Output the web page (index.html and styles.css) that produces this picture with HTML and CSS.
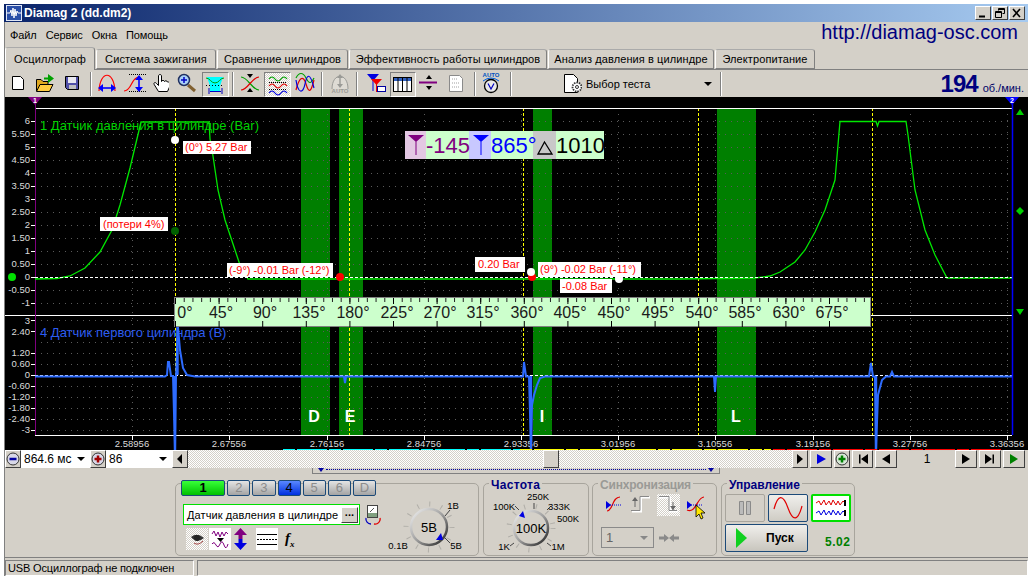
FILE: index.html
```html
<!DOCTYPE html>
<html lang="en">
<head>
  <meta charset="UTF-8" />
  <title>Diamag 2 (dd.dm2)</title>
  <link rel="stylesheet" href="styles.css">
</head>
<body>
<div class="window">
  <div class="titlebar">
    <svg width="16" height="16" viewBox="0 0 16 16"><rect x="0.5" y="0.5" width="15" height="15" fill="#2a4fa8" stroke="#dfe6f5"/><path d="M1 8H4L5 5 6 11 7 3 8 13 9 4 10 11 11 6 12 8H15" fill="none" stroke="#fff"/></svg>
    <span class="title-text">Diamag 2 (dd.dm2)</span>
    <div class="win-btns">
      <div class="win-btn"><svg width="14" height="12" viewBox="0 0 14 12"><path d="M3 9.5H9" stroke="#000" stroke-width="2"/></svg></div>
      <div class="win-btn"><svg width="14" height="12" viewBox="0 0 14 12"><path d="M5.5 3.5V1.5H11.5V6.5H9.5M2.5 4.5H8.5V10.5H2.5ZM2.5 5.5H8.5M5.5 2.5H11.5" fill="none" stroke="#000"/></svg></div>
      <div class="win-btn"><svg width="14" height="12" viewBox="0 0 14 12"><path d="M3 2L10 10M10 2L3 10" stroke="#000" stroke-width="1.6"/></svg></div>
    </div>
  </div>
  <div class="client">
    <div class="menubar">
      <span class="menu-item">Файл</span>
      <span class="menu-item">Сервис</span>
      <span class="menu-item">Окна</span>
      <span class="menu-item">Помощь</span>
      <span class="site-url">http://diamag-osc.com</span>
    </div>
    <div class="tabs">
      <div class="tab active">Осциллограф</div>
      <div class="tab">Система зажигания</div>
      <div class="tab">Сравнение цилиндров</div>
      <div class="tab">Эффективность работы цилиндров</div>
      <div class="tab">Анализ давления в цилиндре</div>
      <div class="tab">Электропитание</div>
    </div>

    <div class="toolbar">
      <svg width="27" height="24" viewBox="5 72 27 24"><path d="M12.5 76.5H20.5L23.5 79.5V89.5H12.5Z" fill="#fff" stroke="#000"/></svg>
      <svg width="27" height="24" viewBox="32 72 27 24"><path d="M36.5 91V79.5H41L43 81.5H48V84" fill="#e0a820" stroke="#000"/><path d="M36.5 91.5L40 84.5H53L49.5 91.5Z" fill="#ffcc40" stroke="#000"/><path d="M48 74L54 78.5 48 83Z" fill="#00a000"/><path d="M44 78.5H49" stroke="#00a000" stroke-width="2"/></svg>
      <svg width="27" height="24" viewBox="59 72 27 24"><path d="M65.5 76.5H78.5V89.5H67.5L65.5 87.5Z" fill="#5050a8" stroke="#000"/><rect x="68" y="77" width="8" height="6" fill="#e8e8f0"/><rect x="69" y="85" width="7" height="4" fill="#c0c0c0"/></svg>
      <div class="sep sep-first"></div>
      <svg width="30" height="24" viewBox="92 72 30 24"><path d="M99 91C100 70 114 70 115 91" fill="none" stroke="#f00" stroke-width="1.2"/><path d="M101 88H113" stroke="#00f" stroke-width="1.6"/><path d="M98 88L103 84V92ZM116 88L111 84V92Z" fill="#00f"/></svg>
      <svg width="31" height="24" viewBox="122 72 31 24"><path d="M124 91C132 91 131 77 139 77" fill="none" stroke="#f00" stroke-width="1.2"/><path d="M129 74.5H146M129 91.5H146" stroke="#000" stroke-dasharray="1 1"/><path d="M139 78V89" stroke="#00f" stroke-width="1.6"/><path d="M139 75L135 80H143ZM139 92L135 87H143Z" fill="#00f"/></svg>
      <svg width="16" height="24" viewBox="153 72 16 24"><path d="M158.500 91.500L154.500 85C153 83 155 81.500 156.500 83.500L158.500 85.500V76C158.500 74 161.500 74 161.500 76V81.500C162 80 164 80 164.500 81.500 165 80.500 167 80.500 167.500 82 168 81.500 169.500 82 169.500 83.500V87L167.500 91.500Z" fill="#fff" stroke="#000"/></svg>
      <svg width="33" height="24" viewBox="169 72 33 24"><path d="M188 85L195 91" stroke="#806030" stroke-width="3"/><circle cx="184" cy="80" r="5.500" fill="#a8d0f8" stroke="#203060" stroke-width="1.500"/><path d="M181 80H187M184 77V83" stroke="#0000c0" stroke-width="1.500"/></svg>
      <div class="tool-on">
        <svg width="25" height="22" viewBox="203 73 25 22"><path d="M207 76H223L220 85V91H210V85Z" fill="#00ffff"/><path d="M206 77C210 77 211 82 215 82S220 77 224 77" fill="none" stroke="#00a000"/><path d="M206 84.500H224" stroke="#000" stroke-dasharray="1 2"/><path d="M210 90.500H221" stroke="#0000c0"/><path d="M209 87V93M222 87V93" stroke="#0000c0"/></svg>
      </div>
      <div class="sep sep-mid"></div>
      <svg width="30" height="24" viewBox="234 72 30 24"><path d="M241 77C248 77 252 90 259 90" fill="none" stroke="#00a000" stroke-width="1.200"/><path d="M241 90C248 90 252 77 259 77" fill="none" stroke="#e00000" stroke-width="1.200"/><path d="M247 74H253L250 78ZM247 92H253L250 88Z" fill="#000"/></svg>
      <div class="tool-on dither">
        <svg width="25" height="24" viewBox="265 72 25 24"><path d="M269 77Q272 73 275 77T281 77T287 77" fill="none" stroke="#00a000" stroke-width="1.200"/><path d="M269 84Q272 80 275 84T281 84T287 84" fill="none" stroke="#e00000" stroke-width="1.200"/><path d="M269 91Q272 87 275 91T281 91T287 91" fill="none" stroke="#0000e0" stroke-width="1.200"/><path d="M269 80.500H287M269 87.500H287" stroke="#000" stroke-dasharray="1 1"/></svg>
      </div>
      <svg width="30" height="24" viewBox="290 72 30 24"><path d="M295 78C298 72 302 72 305 78S310 84 313 78" fill="none" stroke="#00a000" stroke-width="1.200"/><path d="M295 90C298 78 302 74 305 84S310 92 313 80" fill="none" stroke="#e00000" stroke-width="1.200"/><path d="M295 80C297 94 302 94 304 84S309 72 313 88" fill="none" stroke="#0000e0" stroke-width="1.200"/></svg>
      <div class="sep sep-mid2"></div>
      <svg width="32" height="24" viewBox="323 72 32 24"><path d="M331 89C331 72 347 72 347 89" fill="#dedbd4" stroke="#9a9a96"/><path d="M339 77V85" stroke="#9a9a96" stroke-width="1.400"/><path d="M339 74L336 78H342ZM339 88L336 84H342Z" fill="#9a9a96"/><text x="339" y="93" class="tiny-grey" text-anchor="middle">AUTO</text></svg>
      <div class="sep sep-tight"></div>
      <svg width="31" height="24" viewBox="358 72 31 24"><path d="M366 74H378L372 81Z" fill="#0000e0"/><path d="M372 80V91" stroke="#0000e0"/><path d="M370 79H381L375.500 85Z" fill="#f00000"/><path d="M375.500 84V92" stroke="#f00000"/><rect x="376.500" y="86.500" width="8" height="5" fill="#fff" stroke="#0000a0"/></svg>
      <div class="tool-on">
        <svg width="24" height="22" viewBox="390 73 24 22"><rect x="392.500" y="76.500" width="18" height="14" fill="#fff" stroke="#000"/><rect x="393" y="77" width="17" height="3" fill="#3060c0"/><path d="M397 77V90M401.500 77V90M406 77V90" stroke="#000"/></svg>
      </div>
      <svg width="33" height="24" viewBox="415 72 33 24"><path d="M418 82.500H436" stroke="#800080" stroke-width="2"/><path d="M425 79H431L428 75ZM425 86H431L428 90Z" fill="#000"/></svg>
      <svg width="24" height="24" viewBox="448 72 24 24"><path d="M448.500 75.500H458.500L461.500 78.500V91.500H448.500Z" fill="#fff" stroke="#8a8a8a"/><path d="M451 79H456M451 83H458M451 87H458" stroke="#a0a0a0" stroke-dasharray="1 1"/></svg>
      <div class="sep sep-mid3"></div>
      <svg width="33" height="24" viewBox="475 72 33 24"><text x="489" y="77" class="tiny-blue" text-anchor="middle">AUTO</text><path d="M481 81Q489 75 497 81" fill="none" stroke="#0060e0"/><circle cx="489" cy="86" r="6.500" fill="#e8e8e8" stroke="#000" stroke-width="1.300"/><path d="M486 83.500L489 89 492 83.500" fill="none" stroke="#0000c0" stroke-width="1.200"/></svg>
      <div class="sep"></div>
      <div class="test-select">
        <svg width="20" height="24" viewBox="560 72 20 24"><path d="M562.500 74.500H571.500L575.500 78.500V92.500H562.500Z" fill="#fff" stroke="#000"/><circle cx="575" cy="87" r="4.500" fill="#fff" stroke="#333" stroke-width="1.800" stroke-dasharray="1.500 1"/><circle cx="575" cy="87" r="1.500" fill="none" stroke="#333"/></svg>
        <span class="test-label">Выбор теста</span>
        <span class="drop-arrow"></span>
      </div>
      <div class="sep sep-last"></div>
      <div class="rpm"><span class="rpm-num">194</span><span class="rpm-unit">об./мин.</span></div>
    </div>

    <svg class="scope" width="1023" height="353" viewBox="5 97 1023 353">
      <rect x="5" y="97" width="1023" height="353" fill="#000"/>
      <!-- band marks -->
      <path class="band" d="M301 108H330V435H301ZM339 108H363V435H339ZM533 108H552V435H533ZM717 108H756V435H717Z"/>
      <!-- grid -->
      <path class="grid-line" d="M35 121.500H1012M35 134.500H1012M35 147.500H1012M35 160.500H1012M35 173.500H1012M35 186.500H1012M35 199.500H1012M35 212.500H1012M35 225.500H1012M35 238.500H1012M35 251.500H1012M35 264.500H1012M35 290.500H1012M35 303.500H1012"/>
      <path class="grid-line" d="M35 320.500H1012M35 331.500H1012M35 342.500H1012M35 353.500H1012M35 364.500H1012M35 386.500H1012M35 397.500H1012M35 408.500H1012M35 419.500H1012M35 430.500H1012"/>
      <path class="grid-line" d="M132.500 108V435M229.500 108V435M327.500 108V435M424.500 108V435M521.500 108V435M618.500 108V435M715.500 108V435M813.500 108V435M910.500 108V435M1007.500 108V435"/>
      <path class="cursor" d="M175.500 108V435M349.500 108V435M523.500 108V435M698.500 108V435M872.500 108V435"/>
      <path class="frame" d="M35 108.500H1012M5 315.500H1012M35 435.500H1012"/>
      <path class="purple-axis" d="M35.500 100V435"/>
      <path class="frame" d="M31 121.500H35M31 134.500H35M31 147.500H35M31 160.500H35M31 173.500H35M31 186.500H35M31 199.500H35M31 212.500H35M31 225.500H35M31 238.500H35M31 251.500H35M31 264.500H35M31 277.500H35M31 290.500H35M31 303.500H35M31 320.500H35M31 331.500H35M31 353.500H35M31 364.500H35M31 375.500H35M31 386.500H35M31 397.500H35M31 408.500H35M31 419.500H35M31 430.500H35"/>
      <path class="frame" d="M132.500 435V440M229.500 435V440M327.500 435V440M424.500 435V440M521.500 435V440M618.500 435V440M715.500 435V440M813.500 435V440M910.500 435V440M1007.500 435V440"/>
      <!-- y axis values -->
      <g class="axis-y">
        <text x="30" y="124">6</text><text x="30" y="137">5.50</text><text x="30" y="150">5</text><text x="30" y="163">4.50</text><text x="30" y="176">4</text><text x="30" y="189">3.50</text><text x="30" y="202">3</text><text x="30" y="215">2.50</text><text x="30" y="228">2</text><text x="30" y="241">1.50</text><text x="30" y="254">1</text><text x="30" y="267">0.50</text><text x="30" y="280">0</text><text x="30" y="293">-0.50</text><text x="30" y="306">-1</text>
        <text x="30" y="324">3</text><text x="30" y="335">2.40</text><text x="30" y="356">1.20</text><text x="30" y="367">0.60</text><text x="30" y="378">0</text><text x="30" y="389">-0.60</text><text x="30" y="400">-1.20</text><text x="30" y="411">-1.80</text><text x="30" y="422">-2.40</text><text x="30" y="433">-3</text>
      </g>
      <g class="axis-x">
        <text x="132" y="447">2.58956</text><text x="229" y="447">2.67556</text><text x="327" y="447">2.76156</text><text x="424" y="447">2.84756</text><text x="521" y="447">2.93356</text><text x="618" y="447">3.01956</text><text x="715" y="447">3.10556</text><text x="813" y="447">3.19156</text><text x="910" y="447">3.27756</text><text x="1007" y="447">3.36356</text>
      </g>
      <!-- zero lines and traces -->
      <text class="chan-label green" x="40" y="130">1 Датчик давления в цилиндре (Bar)</text>
      <text class="chan-label blue" x="40" y="337">4 Датчик первого цилиндра (В)</text>
      <path class="trace-green" d="M35 279L57 278.500 70 276 85 268 100 252 112 230 120 205 130 168 141 122H209L210 139 213 156 218 190 225 220 235 250 240 265 248 279H680L755 278 770 276 780 272 795 262 805 250 815 232 825 210 835 180 840 121.500H876L877.500 126 879 121.500H906L908 135 915 190 925 230 935 255 947 278H1012"/>
      <path class="zero" d="M35 277.500H1012M35 375.500H1012"/>
      <path class="trace-blue" d="M35 376.500H165L167 375 168 362 169 362 171 376H173L175 450 176 376 178 327 180 350 183 368 187 375 195 376.500H344L345 383 346 376.500H523L524 362 526 376.500H529L531 450 532 405 534 395 537 385 540 378 545 376.500H714L715 392 716 376.500H869L871 363 873 376.500H875L876 450 878 395 882 380 886 376.500H890L892 372 894 376.500H1012"/>
      <path class="spike" d="M175 376V450M177.500 327V375M531 376V450M876 376V450"/>
      <path class="blue-axis" d="M1012.500 100V435"/>
      <!-- scrollbar marks -->
      <path class="mark mark-cyan" d="M283 449.500H520"/>
      <path class="mark mark-yellow" d="M520 449.500H771"/>
      <path class="mark mark-red" d="M773 449.500H1003"/>
      <!-- channel triangles -->
      <path d="M28 97H42L35 105Z" fill="#800080"/>
      <text class="tri-num" x="35" y="103">1</text>
      <path d="M1005 97H1019L1012 105Z" fill="#0000ff"/>
      <text class="tri-num" x="1012" y="103">2</text>
      <path class="handle" d="M1016 115H1024L1020 109ZM1020 207L1024 211 1020 215 1016 211ZM1016 309H1024L1020 315Z"/>
      <circle cx="12" cy="277" r="4" fill="#00e000"/>
      <!-- band letters -->
      <g class="band-letter"><text x="314" y="422">D</text><text x="350" y="422">E</text><text x="542" y="422">I</text><text x="736" y="422">L</text></g>
      <!-- cursor points -->
      <circle cx="175" cy="140" r="4" fill="#fff"/>
      <circle cx="175" cy="231" r="4" fill="#006000"/>
      <circle cx="340" cy="277" r="4" fill="#f00"/>
      <circle cx="532" cy="277" r="4" fill="#f00"/>
      <circle cx="531" cy="272" r="4" fill="#fff"/>
      <circle cx="619" cy="279" r="4" fill="#fff"/>
      <!-- value labels -->
      <rect class="tag" x="183" y="141" width="68" height="13"/><text class="tag-text" x="185" y="151">(0°) 5.27 Bar</text>
      <rect class="tag" x="100" y="217" width="68" height="14"/><text class="tag-text" x="103" y="228">(потери 4%)</text>
      <rect class="tag" x="227" y="263" width="106" height="14"/><text class="tag-text" x="229" y="274">(-9°) -0.01 Bar (-12°)</text>
      <rect class="tag" x="475" y="257" width="50" height="15"/><text class="tag-text" x="478" y="268">0.20 Bar</text>
      <rect class="tag" x="538" y="262" width="103" height="15"/><text class="tag-text" x="540" y="273">(9°) -0.02 Bar (-11°)</text>
      <rect class="tag" x="560" y="279" width="52" height="14"/><text class="tag-text" x="562" y="290">-0.08 Bar</text>
      <!-- cursor readout -->
      <rect x="405" y="131" width="199" height="28" fill="#ccffcc"/>
      <rect x="405" y="131" width="21" height="28" fill="#e3c8e3"/>
      <rect x="469" y="131" width="22" height="28" fill="#c8c8ff"/>
      <rect x="533" y="131" width="23" height="28" fill="#c8c8c8"/>
      <path d="M408 135H424L416 142ZM415.500 140H416.500V155H415.500Z" fill="#800080"/>
      <path d="M473 135H489L481 142ZM480.500 140H481.500V155H480.500Z" fill="#0000ff"/>
      <path d="M544.500 142L552 154H538Z" fill="none" stroke="#000" stroke-width="1.300"/>
      <text class="readout purple" x="426" y="153">-145</text>
      <text class="readout blue-text" x="491" y="153">865°</text>
      <text class="readout" x="556" y="153">1010</text>
      <!-- degree ruler -->
      <rect x="174.500" y="297.500" width="696" height="29" fill="#ccffcc" stroke="#808080"/>
      <path class="ruler-minor" d="M175 300H870"/>
      <path class="ruler-major" d="M175 301H870M175 324H870"/>
      <g class="ruler-text">
        <text x="185" y="318">0°</text><text x="221" y="318">45°</text><text x="265" y="318">90°</text><text x="309" y="318">135°</text><text x="353" y="318">180°</text><text x="397" y="318">225°</text><text x="440" y="318">270°</text><text x="483" y="318">315°</text><text x="527" y="318">360°</text><text x="570" y="318">405°</text><text x="614" y="318">450°</text><text x="658" y="318">495°</text><text x="702" y="318">540°</text><text x="745" y="318">585°</text><text x="789" y="318">630°</text><text x="832" y="318">675°</text>
      </g>
    </svg>

    <div class="scroll-row">
      <div class="square-btn"><svg width="14" height="14" viewBox="0 0 14 14"><circle cx="7" cy="7" r="6" fill="#d8d8e8" stroke="#333"/><path d="M3.500 7H10.500" stroke="#0000a0" stroke-width="2.500"/></svg></div>
      <div class="combo combo-time"><span>864.6 мс</span><span class="drop-arrow"></span></div>
      <div class="square-btn"><svg width="14" height="14" viewBox="0 0 14 14"><circle cx="7" cy="7" r="6" fill="#d8d8e8" stroke="#333"/><path d="M3.500 7H10.500M7 3.500V10.500" stroke="#a00000" stroke-width="2.500"/></svg></div>
      <div class="combo combo-count"><span>86</span><span class="drop-arrow"></span></div>
      <div class="square-btn arrow-btn"><svg width="14" height="14" viewBox="0 0 14 14"><path d="M9 2V12L4 7Z" fill="#000"/></svg></div>
      <div class="scroll-track"><div class="scroll-thumb"></div></div>
      <div class="nav">
        <div class="nav-btn n-small"><svg width="12" height="14" viewBox="0 0 12 14"><path d="M3 2L9 7 3 12Z" fill="#000"/></svg></div>
        <div class="nav-btn n-wide"><svg width="14" height="14" viewBox="0 0 14 14"><path d="M3 2L12 7 3 12Z" fill="#0000e0"/></svg></div>
        <div class="nav-btn n-small"><svg width="14" height="14" viewBox="0 0 14 14"><circle cx="7" cy="7" r="6" fill="#d8e8d8" stroke="#333"/><path d="M3.500 7H10.500M7 3.500V10.500" stroke="#008000" stroke-width="2.500"/></svg></div>
        <div class="nav-btn"><svg width="14" height="14" viewBox="0 0 14 14"><path d="M3 2.500H4.500V11.500H3ZM12 2L5 7 12 12Z" fill="#000"/></svg></div>
        <div class="nav-btn n-wide"><svg width="14" height="14" viewBox="0 0 14 14"><path d="M11 2L3 7 11 12Z" fill="#000"/></svg></div>
        <div class="nav-page">1</div>
        <div class="nav-btn n-wide"><svg width="14" height="14" viewBox="0 0 14 14"><path d="M3 2L11 7 3 12Z" fill="#000"/></svg></div>
        <div class="nav-btn n-wide"><svg width="14" height="14" viewBox="0 0 14 14"><path d="M9.500 2.500H11V11.500H9.500ZM2 2L9 7 2 12Z" fill="#000"/></svg></div>
        <div class="nav-btn n-wide"><svg width="14" height="14" viewBox="0 0 14 14"><path d="M3 2L11 7 3 12Z" fill="#008000"/></svg></div>
      </div>
    </div>

    <div class="splitter"><span class="split-tri"></span><span class="split-dots"></span><span class="split-tri"></span></div>

    <div class="panel">
      <div class="group group-chan">
        <div class="chan-col">
          <div class="chan-row">
            <div class="chan chan-first">1</div>
            <div class="chan">2</div>
            <div class="chan">3</div>
            <div class="chan chan-blue">4</div>
            <div class="chan">5</div>
            <div class="chan">6</div>
            <div class="chan">D</div>
          </div>
          <div class="name-row">
            <div class="name-box"><span>Датчик давления в цилиндре</span><div class="dots-btn">...</div></div>
            <svg class="name-icon" width="18" height="21" viewBox="364 504 18 21"><rect x="367.500" y="505.500" width="10" height="12" fill="#fff" stroke="#444"/><rect x="368" y="513" width="9" height="4" fill="#80a080"/><path d="M370 512L374 508" stroke="#555"/><path d="M371 524A5 5 0 0 1 366 518" fill="none" stroke="#0000c0" stroke-width="1.300"/><path d="M374 524A5 5 0 0 0 380 518" fill="none" stroke="#e00000" stroke-width="1.300"/></svg>
          </div>
          <div class="icon-row">
            <div class="icon-box dither"><svg width="22" height="22" viewBox="186 528 22 22"><path d="M191 537Q197 532 204 538 197 544 191 537Z" fill="#333"/><circle cx="197" cy="538" r="3" fill="#222"/><path d="M194 543Q198 546 203 541" fill="none" stroke="#a04040"/></svg></div>
            <div class="icon-box icon-wave"><svg width="22" height="22" viewBox="209 528 22 22"><path d="M212 534L214 531 216 536 218 532 220 537 222 532 224 536 226 532 228 534M212 544Q214 541 216 545T220 544 224 545 228 544" fill="none" stroke="#800080"/><path d="M217 538H224L220.500 542Z" fill="#000"/></svg></div>
            <svg class="icon-arrows" width="17" height="22" viewBox="231 528 17 22"><path d="M239.500 528L233 535H237.500V539H241.500V535H246Z" fill="#800080"/><path d="M239.500 550L233 543H237.500V539H241.500V543H246Z" fill="#0000e0"/></svg>
            <div class="icon-box icon-lines"><svg width="22" height="22" viewBox="256 528 22 22"><path d="M257 534.500H277M257 544.500H277" stroke="#000"/><path d="M257 539.500H277" stroke="#000" stroke-dasharray="2 1"/></svg></div>
            <span class="fx">f<sub>x</sub></span>
          </div>
        </div>
        <svg class="knob knob-volt" width="96" height="64" viewBox="381 490 96 64">
          <defs>
            <linearGradient id="ring" x1="0" y1="0" x2="1" y2="1"><stop offset="0" stop-color="#f4f4f4"/><stop offset="0.5" stop-color="#a0a0a0"/><stop offset="1" stop-color="#202020"/></linearGradient>
          </defs>
          <circle class="knob-ticks" cx="428" cy="527" r="23"/>
          <path class="knob-lead" d="M444 516L449 510M444 538L449 543"/>
          <circle cx="428" cy="527" r="18" fill="none" stroke="url(#ring)" stroke-width="2.500"/>
          <text class="knob-mid" x="428" y="532">5В</text>
          <text class="knob-num" x="452" y="509">1В</text>
          <text class="knob-num" x="397" y="549">0.1В</text>
          <text class="knob-num" x="455" y="549">5В</text>
          <path d="M435 540L440 533 442 540Z" fill="#0000e0"/>
        </svg>
      </div>

      <div class="group group-freq">
        <div class="legend">Частота</div>
        <svg class="knob" width="103" height="62" viewBox="484 492 103 62">
          <circle class="knob-ticks" cx="531" cy="528" r="22"/>
          <path class="knob-lead" d="M534 503V509M519 510L515 506M547 510L551 506M514 543L510 546M547 543L551 546"/>
          <circle cx="531" cy="528" r="17" fill="none" stroke="url(#ring)" stroke-width="2.500"/>
          <text class="knob-mid" x="531" y="533">100K</text>
          <text class="knob-num" x="538" y="500">250K</text>
          <text class="knob-num" x="504" y="510">100K</text>
          <text class="knob-num" x="559" y="510">333K</text>
          <text class="knob-num" x="568" y="522">500K</text>
          <text class="knob-num" x="504" y="550">1K</text>
          <text class="knob-num" x="558" y="550">1M</text>
          <path d="M519 516L523 511 525 518Z" fill="#0000e0"/>
        </svg>
      </div>

      <div class="group group-sync">
        <div class="legend legend-off">Синхронизация</div>
        <div class="sync-icons">
          <svg width="24" height="22" viewBox="602 494 24 22"><path d="M607 511C613 511 612 497 620 497" fill="none" stroke="#e00000" stroke-width="1.200"/><path d="M608 505H622" stroke="#0000e0" stroke-dasharray="1 1"/><path d="M606 501V509L611 505Z" fill="#0000e0"/></svg>
          <svg width="24" height="22" viewBox="626 494 24 22"><path d="M632 511.500H641V497.500H650" fill="none" stroke="#fff" stroke-width="2"/><path d="M631 510.500H640V496.500H649" fill="none" stroke="#888"/><path d="M635 499V507" stroke="#666"/><path d="M635 497L632 501H638Z" fill="#666"/></svg>
          <div class="sync-on dither"><svg width="23" height="22" viewBox="657 494 23 22"><path d="M659 497.500H670V511.500H678" fill="none" stroke="#fff" stroke-width="2"/><path d="M659 496.500H669V510.500H677" fill="none" stroke="#888"/><path d="M673 502V510" stroke="#666"/><path d="M673 510L670 506H676Z" fill="#666"/></svg></div>
          <svg class="sync-last" width="24" height="26" viewBox="685 494 24 26"><path d="M687 510C696 514 697 497 704 497" fill="none" stroke="#e00000" stroke-width="1.200"/><path d="M689 505H702" stroke="#0000e0" stroke-dasharray="1 1"/><path d="M687 501V509L692 505Z" fill="#0000e0"/><path d="M696 505V517L699 514 701 519 703 518 701 513H705Z" fill="#ffe800" stroke="#000" stroke-width="0.800"/></svg>
        </div>
        <div class="sync-row">
          <div class="sync-combo"><span>1</span><span class="drop-arrow drop-grey"></span></div>
          <svg width="20" height="10" viewBox="0 0 20 10"><path d="M0 3.500H5V1L10 5 5 9V6.500H0ZM20 3.500H15V1L10 5 15 9V6.500H20Z" fill="#8a8a8a"/></svg>
        </div>
      </div>

      <div class="group group-ctrl">
        <div class="legend">Управление</div>
        <div class="ctrl-grid">
          <div class="ctrl-btn ctrl-off"><svg width="14" height="16" viewBox="0 0 14 16"><path d="M1.500 1.500H5.500V14.500H1.500ZM8.500 1.500H12.500V14.500H8.500Z" fill="#bbb" stroke="#8a8a8a"/></svg></div>
          <div class="ctrl-btn ctrl-navy"><svg width="30" height="22" viewBox="0 0 30 22"><path d="M1 12C5 -3 10 -3 15 11S25 24 29 9" fill="none" stroke="#e00000" stroke-width="1.200"/></svg></div>
          <div class="ctrl-btn ctrl-green"><svg width="32" height="22" viewBox="0 0 32 22"><path d="M1 6L4 4 6 8 9 3 11 8 14 4 16 8 18 3 21 8 23 4 25 8 28 4 30 6" fill="none" stroke="#e00000"/><path d="M1 16L4 14 6 18 9 13 11 18 14 14 16 18 18 13 21 18 23 14 25 18 28 14 30 16" fill="none" stroke="#0000e0"/><path d="M30 3V9M30 13V19" stroke="#000" stroke-width="2"/></svg></div>
          <div class="start-btn"><svg width="11" height="20" viewBox="0 0 11 20"><path d="M0 0L11 10 0 20Z" fill="#10d020"/></svg><span>Пуск</span></div>
          <div class="version">5.02</div>
        </div>
      </div>
    </div>

    <div class="statusbar">
      <div class="status-cell status-main">USB Осциллограф не подключен</div>
      <div class="status-cell status-rest"></div>
    </div>
  </div>
</div>
</body>
</html>
```
FILE: styles.css
```css
html, body {
  margin: 0;
  height: 580px;
  overflow: hidden;
  background: #fff;
}
body {
  padding-top: 4px;
  box-sizing: border-box;
  font-family: "Liberation Sans", Arial, sans-serif;
  font-size: 11px;
  color: #000;
}
.window {
  margin-left: 4px;
  width: 1024px;
}
.dither {
  background: repeating-conic-gradient(#fff 0 25%, #d4d0c8 0 50%) 0 0/2px 2px;
}

/* title bar */
.titlebar {
  height: 18px;
  display: flex;
  align-items: center;
  padding-left: 2px;
  background: linear-gradient(to right, #0a246a, #a6caf0);
}
.title-text {
  margin-left: 2px;
  color: #fff;
  font-weight: bold;
  font-size: 12px;
}
.win-btns {
  margin-left: auto;
  margin-right: 3px;
  display: flex;
  gap: 1px;
}
.win-btn {
  width: 16px;
  height: 14px;
  box-sizing: border-box;
  background: #d4d0c8;
  border: 1px solid;
  border-color: #fff #404040 #404040 #fff;
  display: flex;
  justify-content: center;
  align-items: center;
}

.client {
  background: #d4d0c8;
  border-left: 1px solid #808080;
  height: 554px;
}

/* menu */
.menubar {
  height: 25px;
  display: flex;
  align-items: center;
  padding-left: 5px;
  gap: 9px;
  font-size: 11px;
  letter-spacing: -0.1px;
}
.site-url {
  margin-left: auto;
  margin-right: 10px;
  margin-bottom: 5px;
  font-size: 20px;
  letter-spacing: 0;
  color: #00007f;
}

/* tabs */
.tabs {
  height: 23px;
  box-sizing: border-box;
  display: grid;
  grid-template-columns: 91px 121px 132px 199px 167px 101px;
  border-bottom: 1px solid #808080;
  align-items: end;
}
.tab {
  height: 20px;
  margin-right: 1px;
  box-sizing: border-box;
  display: flex;
  align-items: center;
  justify-content: center;
  border: 1px solid;
  border-color: #aaa #808080 #808080 #fff;
  border-radius: 3px 3px 0 0;
  letter-spacing: 0.1px;
}
.tab.active {
  height: 23px;
  margin-bottom: -1px;
  background: #d4d0c8;
  border-bottom: 0;
  border-color: #aaa #808080 #d4d0c8 #fff;
  position: relative;
}

/* toolbar */
.toolbar {
  height: 27px;
  box-sizing: border-box;
  padding-top: 2px;
  display: flex;
  align-items: flex-start;
}
.sep {
  flex: none;
  width: 2px;
  height: 24px;
  box-sizing: border-box;
  background: #808080;
  border-right: 1px solid #fff;
}
.sep-first { margin-left: 4px; }
.sep-mid { margin: 0 0 0 3px; }
.sep-mid2 { margin: 0 1px 0 0; }
.sep-tight { margin: 0 1px 0 0; }
.sep-mid3 { margin: 0 1px 0 1px; }
.sep-last { margin-left: 3px; }
.tool-on {
  flex: none;
  box-sizing: border-box;
  height: 25px;
  padding: 1px 0 0 0;
  border: 1px solid;
  border-color: #808080 #fff #fff #808080;
  display: flex;
}
.tiny-grey {
  font-size: 6px;
  font-weight: bold;
  fill: #9a9a96;
}
.tiny-blue {
  font-size: 6px;
  font-weight: bold;
  fill: #0050c0;
}
.test-select {
  width: 155px;
  height: 24px;
  margin-left: 50px;
  display: flex;
  align-items: center;
  gap: 4px;
}
.test-label { flex: 1; }
.drop-arrow {
  width: 0;
  height: 0;
  flex: none;
  border-left: 4px solid transparent;
  border-right: 4px solid transparent;
  border-top: 4px solid #000;
}
.drop-grey { border-top-color: #888; }
.test-select .drop-arrow { margin-right: 5px; }
.rpm {
  margin-left: auto;
  margin-right: 4px;
  display: flex;
  align-items: baseline;
  gap: 5px;
  color: #00007f;
}
.rpm-num {
  font-size: 24px;
  font-weight: bold;
  line-height: 24px;
  letter-spacing: -1px;
}
.rpm-unit {
  font-size: 11px;
  color: #000066;
}

/* oscillogram */
.scope {
  display: block;
  font-family: "Liberation Sans", Arial, sans-serif;
}
.band { fill: #007f00; }
.grid-line {
  fill: none;
  stroke: #5a5a5a;
  stroke-dasharray: 1 5;
  shape-rendering: crispEdges;
}
.cursor {
  fill: none;
  stroke: #ffff00;
  stroke-dasharray: 3 2;
  shape-rendering: crispEdges;
}
.frame {
  fill: none;
  stroke: #fff;
  shape-rendering: crispEdges;
}
.purple-axis {
  stroke: #800080;
  shape-rendering: crispEdges;
}
.blue-axis {
  stroke: #0000ff;
  stroke-width: 1.5;
}
.zero {
  fill: none;
  stroke: #fff;
  stroke-dasharray: 3 2;
  shape-rendering: crispEdges;
}
.axis-y text {
  font-size: 9.5px;
  fill: #dcdcdc;
  text-anchor: end;
}
.axis-x text {
  font-size: 9.5px;
  fill: #dcdcdc;
  text-anchor: middle;
}
.chan-label { font-size: 13px; }
.chan-label.green { fill: #00d400; }
.chan-label.blue { fill: #2c5cf0; }
.trace-green {
  fill: none;
  stroke: #00e800;
  stroke-width: 1.3;
}
.trace-blue {
  fill: none;
  stroke: #2e6cff;
  stroke-width: 2;
}
.spike {
  fill: none;
  stroke: #2e6cff;
  stroke-width: 2.4;
}
.mark { fill: none; stroke-dasharray: 12 2 30 2; }
.mark-cyan { stroke: #00ffff; }
.mark-yellow { stroke: #ffff00; }
.mark-red { stroke: #ff0000; }
.tri-num {
  font-size: 7px;
  font-weight: bold;
  fill: #fff;
  text-anchor: middle;
}
.handle { fill: #00d000; }
.band-letter text {
  font-size: 16px;
  font-weight: bold;
  fill: #fff;
  text-anchor: middle;
}
.tag { fill: #fff; }
.tag-text {
  font-size: 11px;
  fill: #f00;
}
.readout {
  font-size: 22px;
  fill: #000;
}
.readout.purple { fill: #800080; }
.readout.blue-text { fill: #0000ff; }
.ruler-minor {
  fill: none;
  stroke: #222;
  stroke-width: 4;
  stroke-dasharray: 1 7.72;
}
.ruler-major {
  fill: none;
  stroke: #000;
  stroke-width: 6;
  stroke-dasharray: 1 42.6;
}
.ruler-text text {
  font-size: 16px;
  fill: #1a1a1a;
  text-anchor: middle;
}

/* row under the plot */
.scroll-row {
  height: 18px;
  display: flex;
  align-items: stretch;
}
.square-btn {
  flex: none;
  width: 16px;
  box-sizing: border-box;
  background: #d4d0c8;
  border: 1px solid;
  border-color: #fff #404040 #404040 #fff;
  display: flex;
  align-items: center;
  justify-content: center;
}
.combo {
  flex: none;
  background: #fff;
  font-size: 12px;
  display: flex;
  align-items: center;
  justify-content: space-between;
  padding: 0 5px 0 3px;
  box-sizing: border-box;
}
.combo-time { width: 69px; }
.combo-count { width: 66px; }
.arrow-btn { width: 16px; }
.scroll-track {
  flex: 1;
  position: relative;
  background: repeating-conic-gradient(#fff 0 25%, #d4d0c8 0 50%) 0 0/2px 2px;
}
.scroll-thumb {
  position: absolute;
  left: 355px;
  top: 0;
  width: 16px;
  height: 18px;
  box-sizing: border-box;
  background: #d4d0c8;
  border: 1px solid;
  border-color: #fff #404040 #404040 #fff;
}
.nav {
  flex: none;
  width: 236px;
  display: flex;
}
.nav-btn {
  flex: none;
  width: 21px;
  margin-right: 2px;
  box-sizing: border-box;
  background: #d4d0c8;
  border: 1px solid;
  border-color: #fff #404040 #404040 #fff;
  display: flex;
  align-items: center;
  justify-content: center;
}
.n-small { width: 16px; }
.n-wide { width: 22px; }
.nav-page {
  width: 56px;
  text-align: center;
  font-size: 12px;
  line-height: 18px;
}

.splitter {
  width: 408px;
  height: 6px;
  margin-left: 307px;
  box-sizing: border-box;
  border-bottom: 1px solid #808080;
  border-left: 1px solid #808080;
  border-right: 1px solid #808080;
  display: flex;
  align-items: flex-start;
  padding: 0 5px;
  gap: 2px;
}
.split-tri {
  width: 0;
  height: 0;
  flex: none;
  border-left: 3px solid transparent;
  border-right: 3px solid transparent;
  border-top: 4px solid #0000a0;
}
.split-dots {
  flex: 1;
  height: 2px;
  margin-top: 1px;
  border-top: 1px dotted #0000a0;
}

/* bottom panel */
.panel {
  display: flex;
  align-items: flex-start;
  margin-top: 9px;
  padding-left: 170px;
}
.group {
  flex: none;
  height: 73px;
  box-sizing: border-box;
  border: 1px solid #a8a59d;
  border-radius: 5px;
  display: flex;
  flex-direction: column;
}
.group-chan {
  width: 304px;
  margin-right: 4px;
  flex-direction: row;
}
.group-freq { width: 106px; margin-right: 3px; }
.group-sync { width: 125px; margin-right: 4px; }
.group-ctrl { width: 134px; }
.legend {
  flex: none;
  width: fit-content;
  height: 14px;
  line-height: 14px;
  margin: -6px 0 0 5px;
  padding: 0 2px;
  background: #d4d0c8;
  color: #00007f;
  font-weight: bold;
  font-size: 12px;
  letter-spacing: 0.3px;
}
.legend-off {
  color: #9a9a96;
  letter-spacing: -0.2px;
}
.group-ctrl .legend { letter-spacing: 0; }

.chan-col { width: 200px; flex: none; }
.chan-row {
  margin: -4px 0 0 5px;
  display: flex;
  gap: 2px;
}
.chan {
  width: 25px;
  height: 16px;
  box-sizing: border-box;
  border: 1px solid #1c4a78;
  border-radius: 2px;
  background: linear-gradient(#e4e4e4, #a4a4a4);
  color: #8c8c8c;
  font-size: 13px;
  line-height: 14px;
  text-align: center;
}
.chan-first {
  width: 48px;
  background: linear-gradient(#38ff38, #00c000);
  color: #000;
  font-weight: bold;
}
.chan-blue {
  background: linear-gradient(#5a88ff, #0030e0);
  color: #000;
}
.name-row {
  margin: 8px 0 0 7px;
  display: flex;
  gap: 4px;
}
.name-icon { flex: none; }
.name-box {
  width: 177px;
  height: 21px;
  flex: none;
  box-sizing: border-box;
  border: 1px solid #00e000;
  background: #fff;
  font-size: 11px;
  letter-spacing: 0.1px;
  display: flex;
  align-items: center;
  justify-content: space-between;
  padding: 0 1px 0 3px;
  white-space: nowrap;
}
.dots-btn {
  width: 17px;
  height: 16px;
  box-sizing: border-box;
  background: #d4d0c8;
  border: 1px solid;
  border-color: #fff #404040 #404040 #fff;
  line-height: 9px;
  text-align: center;
  font-weight: bold;
}
.icon-row {
  margin: 3px 0 0 10px;
  display: flex;
  align-items: center;
}
.icon-box {
  width: 22px;
  height: 22px;
  flex: none;
  margin-right: 1px;
}
.icon-wave, .icon-lines { background: #fff; }
.icon-arrows { margin-left: 0; margin-right: 7px; flex: none; }
.fx {
  margin-left: 6px;
  font-family: "Liberation Serif", serif;
  font-style: italic;
  font-weight: bold;
  font-size: 15px;
}
.fx sub { font-size: 9px; }

.knob { display: block; flex: none; }
.knob-volt { margin: 6px 0 0 auto; }
.knob-ticks {
  fill: none;
  stroke: #b0aea8;
  stroke-width: 5;
  stroke-dasharray: 1 11;
}
.knob-lead {
  fill: none;
  stroke: #444;
}
.knob-mid {
  font-family: "Liberation Sans", Arial, sans-serif;
  font-size: 13px;
  text-anchor: middle;
}
.knob-num {
  font-family: "Liberation Sans", Arial, sans-serif;
  font-size: 9.5px;
  text-anchor: middle;
}

.sync-icons {
  display: flex;
  align-items: flex-start;
  margin: 2px 0 0 9px;
}
.sync-on { margin-left: 7px; height: 22px; }
.sync-last { margin-left: 5px; }
.sync-row {
  display: flex;
  align-items: center;
  gap: 5px;
  margin: 7px 0 0 8px;
}
.sync-combo {
  width: 53px;
  height: 21px;
  box-sizing: border-box;
  border: 1px solid #8a8a8a;
  font-size: 13px;
  color: #666;
  display: flex;
  align-items: center;
  justify-content: space-between;
  padding: 0 5px 0 4px;
}

.ctrl-grid {
  display: grid;
  grid-template-columns: 40px 40px 40px;
  grid-template-rows: 28px 28px;
  gap: 2px 3px;
  margin: 2px 0 0 3px;
}
.ctrl-btn {
  box-sizing: border-box;
  display: flex;
  align-items: center;
  justify-content: center;
  border-radius: 2px;
}
.ctrl-off { border: 1px solid #a8a59d; }
.ctrl-navy {
  border: 1px solid #1c4a78;
  background: linear-gradient(#f0efec, #cfccc4);
}
.ctrl-green {
  border: 2px solid #00e000;
  background: #fff;
}
.start-btn {
  grid-column: span 2;
  box-sizing: border-box;
  border: 1px solid #1c4a78;
  border-radius: 2px;
  background: linear-gradient(#f0efec, #c8c5bd);
  display: flex;
  align-items: center;
  padding-left: 10px;
  font-weight: bold;
  font-size: 12px;
}
.start-btn span { margin-left: 19px; }
.version {
  align-self: end;
  padding: 0 0 3px 14px;
  color: #007f00;
  font-weight: bold;
  font-size: 12px;
  letter-spacing: 0.5px;
}

/* status bar */
.statusbar {
  margin-top: 1px;
  border-top: 1px solid #808080;
  padding-top: 2px;
  display: flex;
  gap: 3px;
}
.status-cell {
  height: 16px;
  box-sizing: border-box;
  border: 1px solid;
  border-color: #808080 #fff #fff #808080;
  line-height: 15px;
  padding-left: 2px;
  letter-spacing: -0.15px;
}
.status-main { width: 189px; }
.status-rest { flex: 1; }
```
